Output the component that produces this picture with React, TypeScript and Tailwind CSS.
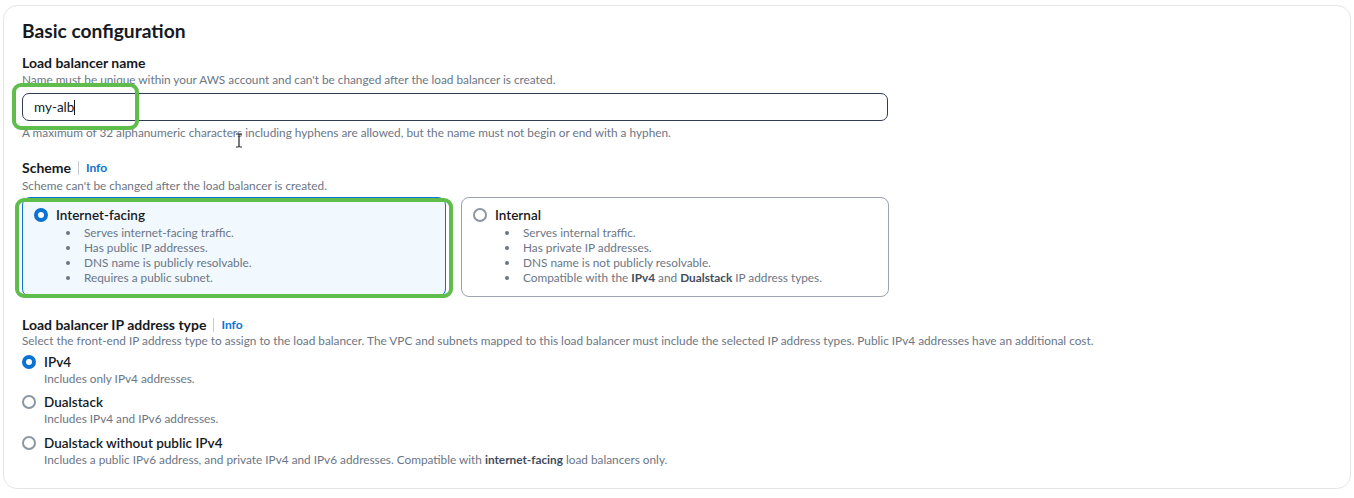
import React from "react";

const font = { fontFamily: "Lato, 'Open Sans', sans-serif" };

function Radio({ checked }: { checked: boolean }) {
  return checked ? (
    <span className="block w-[14px] h-[14px] rounded-full border-[4px] border-[#0972d3] bg-white shrink-0" />
  ) : (
    <span className="block w-[14px] h-[14px] rounded-full border-[2px] border-[#8c96a3] bg-white shrink-0" />
  );
}

function Bullets({ items }: { items: React.ReactNode[] }) {
  return (
    <ul className="mt-[2px] pl-[22px]">
      {items.map((it, i) => (
        <li key={i} className="flex items-center h-[15px] text-[11.8px] leading-[15px] text-[#6b7685]">
          <span className="w-[4px] h-[4px] rounded-full bg-[#6b7685] mr-[14px] shrink-0" />
          <span>{it}</span>
        </li>
      ))}
    </ul>
  );
}

function LabelInfo({ text }: { text: string }) {
  return (
    <div className="flex items-center h-[16px]">
      <span className="text-[14px] leading-[16px] font-bold text-[#16191f]">{text}</span>
      <span className="w-px h-[14px] bg-[#c6ccd4] mx-[7px]" />
      <span className="text-[12px] leading-[16px] font-bold text-[#0972d3]">Info</span>
    </div>
  );
}

function IpOption({ checked, label, desc }: { checked: boolean; label: string; desc: React.ReactNode }) {
  return (
    <div>
      <div className="flex items-center h-[16px]">
        <Radio checked={checked} />
        <span className="ml-[8px] text-[13.5px] leading-[16px] font-semibold text-[#16191f]">{label}</span>
      </div>
      <div className="ml-[22px] mt-[2px] text-[11.8px] leading-[14px] text-[#6b7685]">{desc}</div>
    </div>
  );
}

export default function App() {
  return (
    <div className="w-[1354px] h-[498px] bg-white pt-[5px] px-[3px]" style={font}>
      <div className="relative h-[484px] rounded-[14px] border border-[#e3e5e8] px-[18px] pt-[13px]">
        <div className="text-[19.2px] leading-[24px] font-bold text-[#16191f]">Basic configuration</div>

        <div className="mt-[12px] text-[14px] leading-[16px] font-bold text-[#16191f]">Load balancer name</div>
        <div className="mt-[2px] text-[11.8px] leading-[14px] text-[#6b7685]">
          Name must be unique within your AWS account and can't be changed after the load balancer is created.
        </div>
        <div className="mt-[6px] w-[866px] h-[28px] rounded-[7px] border border-[#2f3d52] flex items-center px-[11px]">
          <span className="text-[13.5px] leading-[16px] text-[#16191f]">my-alb</span>
          <span className="w-px h-[15px] bg-[#16191f]" />
        </div>
        <div className="mt-[5px] text-[11.8px] leading-[14px] text-[#6b7685]">
          A maximum of 32 alphanumeric characters including hyphens are allowed, but the name must not begin or end with a hyphen.
        </div>

        <div className="mt-[20px]">
          <LabelInfo text="Scheme" />
        </div>
        <div className="mt-[3px] text-[11.8px] leading-[14px] text-[#6b7685]">
          Scheme can't be changed after the load balancer is created.
        </div>

        <div className="mt-[4px] flex gap-[15px]">
          <div className="w-[424px] h-[100px] rounded-[8px] border border-[#0972d3] bg-[#f1f8fe] px-[11px] pt-[9px]">
            <div className="flex items-center h-[16px]">
              <Radio checked />
              <span className="ml-[8px] text-[13.5px] leading-[16px] font-semibold text-[#16191f]">Internet-facing</span>
            </div>
            <div className="pl-[10px]">
              <Bullets
                items={[
                  "Serves internet-facing traffic.",
                  "Has public IP addresses.",
                  "DNS name is publicly resolvable.",
                  "Requires a public subnet.",
                ]}
              />
            </div>
          </div>
          <div className="w-[428px] h-[100px] rounded-[8px] border border-[#9ba4b0] bg-white px-[11px] pt-[9px]">
            <div className="flex items-center h-[16px]">
              <Radio checked={false} />
              <span className="ml-[8px] text-[13.5px] leading-[16px] font-semibold text-[#16191f]">Internal</span>
            </div>
            <div className="pl-[10px]">
              <Bullets
                items={[
                  "Serves internal traffic.",
                  "Has private IP addresses.",
                  "DNS name is not publicly resolvable.",
                  <>
                    Compatible with the <b className="text-[#414d5c]">IPv4</b> and{" "}
                    <b className="text-[#414d5c]">Dualstack</b> IP address types.
                  </>,
                ]}
              />
            </div>
          </div>
        </div>

        <div className="mt-[20px]">
          <LabelInfo text="Load balancer IP address type" />
        </div>
        <div className="mt-[1px] text-[11.8px] leading-[14px] text-[#6b7685] whitespace-nowrap">
          Select the front-end IP address type to assign to the load balancer. The VPC and subnets mapped to this load
          balancer must include the selected IP address types. Public IPv4 addresses have an additional cost.
        </div>

        <div className="mt-[6px]">
          <IpOption checked label="IPv4" desc="Includes only IPv4 addresses." />
        </div>
        <div className="mt-[8px]">
          <IpOption checked={false} label="Dualstack" desc="Includes IPv4 and IPv6 addresses." />
        </div>
        <div className="mt-[9px]">
          <IpOption
            checked={false}
            label="Dualstack without public IPv4"
            desc={
              <>
                Includes a public IPv6 address, and private IPv4 and IPv6 addresses. Compatible with{" "}
                <b className="text-[#414d5c]">internet-facing</b> load balancers only.
              </>
            }
          />
        </div>

        {/* green highlight overlays */}
        <div className="absolute left-[8px] top-[77px] w-[127px] h-[47px] rounded-[9px] border-[4px] border-[#5fbd4c]" />
        <div className="absolute left-[11px] top-[192px] w-[438px] h-[100px] rounded-[9px] border-[4px] border-[#5fbd4c]" />

        {/* mouse I-beam cursor */}
        <svg className="absolute left-[230px] top-[127px]" width="10" height="15" viewBox="0 0 10 15">
          <path d="M2 1h2.5M5.5 1H8M5 1v13M2 14h2.5M5.5 14H8" stroke="#222" strokeWidth="1.2" fill="none" />
        </svg>
      </div>
    </div>
  );
}
